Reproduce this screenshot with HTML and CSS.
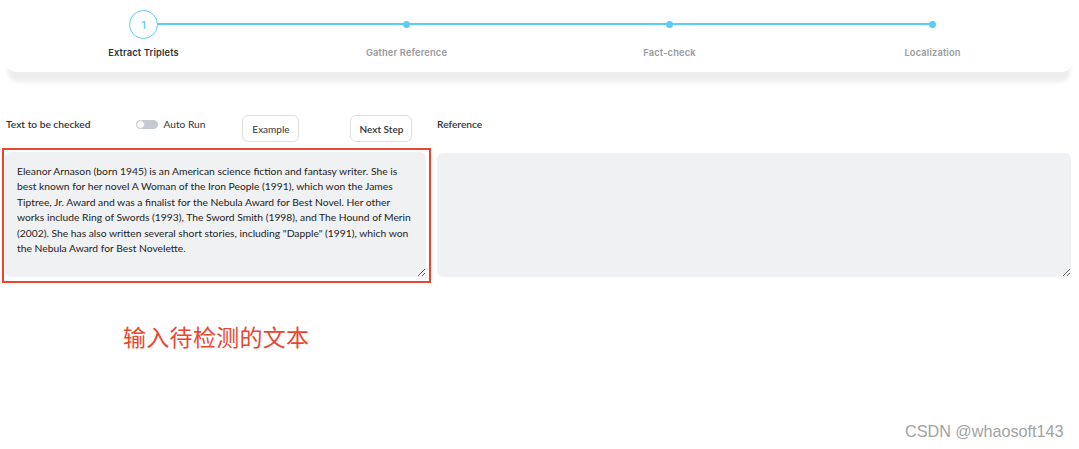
FILE: index.html
```html
<!DOCTYPE html>
<html lang="en">
<head>
<meta charset="utf-8">
<title>Fact-check</title>
<link rel="stylesheet" href="styles.css">
</head>
<body>
<div class="page">
  <div class="stepper">
    <div class="step active">
      <div class="node"><span class="circle">1</span></div>
      <div class="label">Extract Triplets</div>
    </div>
    <div class="step">
      <div class="node"><span class="dot"></span></div>
      <div class="label">Gather Reference</div>
    </div>
    <div class="step">
      <div class="node"><span class="dot"></span></div>
      <div class="label">Fact-check</div>
    </div>
    <div class="step last">
      <div class="node"><span class="dot"></span></div>
      <div class="label">Localization</div>
    </div>
  </div>

  <div class="panels">
    <div class="panel left">
      <div class="head">
        <span class="title">Text to be checked</span>
        <span class="switch"><span class="knob"></span></span>
        <span class="switch-label">Auto Run</span>
        <button class="btn btn-example">Example</button>
        <button class="btn btn-next">Next Step</button>
      </div>
      <div class="highlight">
        <textarea class="box" spellcheck="false">Eleanor Arnason (born 1945) is an American science fiction and fantasy writer. She is best known for her novel A Woman of the Iron People (1991), which won the James Tiptree, Jr. Award and was a finalist for the Nebula Award for Best Novel. Her other works include Ring of Swords (1993), The Sword Smith (1998), and The Hound of Merin (2002). She has also written several short stories, including "Dapple" (1991), which won the Nebula Award for Best Novelette.</textarea>
      </div>
    </div>
    <div class="panel right">
      <div class="head">
        <span class="title">Reference</span>
      </div>
      <textarea class="box ref" spellcheck="false"></textarea>
    </div>
  </div>

  <div class="note">输入待检测的文本</div>
</div>
<div class="watermark">CSDN @whaosoft143</div>
</body>
</html>
```

FILE: styles.css
```css
* { box-sizing: border-box; }

html, body {
  margin: 0;
  padding: 0;
  background: #ffffff;
}

body {
  width: 1079px;
  height: 449px;
  overflow: hidden;
  font-family: "Source Sans Pro", "Lato", "Noto Sans", sans-serif;
  color: #222;
}

.page {
  display: flex;
  flex-direction: column;
}

/* ---------- stepper ---------- */
.stepper {
  margin: 0 6px 0 5px;
  height: 72px;
  padding: 10px 9px 0 7px;
  background: #fff;
  border-radius: 0 0 12px 12px;
  box-shadow: 0 13px 4px -3px rgba(0, 0, 0, 0.07);
  display: grid;
  grid-template-columns: repeat(4, 1fr);
}

.step {
  position: relative;
  display: flex;
  flex-direction: column;
  align-items: center;
}

.step::after {
  content: "";
  position: absolute;
  top: 13px;
  left: 50%;
  width: 100%;
  height: 2px;
  background: #5ccdf6;
}

.step.last::after { display: none; }

.node {
  position: relative;
  z-index: 1;
  height: 29px;
  display: flex;
  align-items: center;
  justify-content: center;
}

.circle {
  width: 29px;
  height: 29px;
  border-radius: 50%;
  border: 1.5px solid #5ccdf6;
  background: #fff;
  color: #5ccdf6;
  font-family: "Inter", "Open Sans", sans-serif;
  font-size: 11px;
  font-weight: 500;
  display: flex;
  align-items: center;
  justify-content: center;
}

.dot {
  width: 7px;
  height: 7px;
  border-radius: 50%;
  background: #5ccdf6;
}

.label {
  margin-top: 8px;
  font-family: "Inter", "Open Sans", sans-serif;
  font-size: 9.3px;
  font-weight: 600;
  color: #9a9a9a;
  letter-spacing: 0.15px;
}

.step.active .label { color: #333; }

/* ---------- panels ---------- */
.panels {
  display: grid;
  grid-template-columns: 429px 1fr;
  column-gap: 6px;
  margin: 41px 8px 0 2px;
}

.head {
  height: 35px;
  display: flex;
  align-items: flex-start;
  padding-top: 3px;
  font-size: 10.2px;
}

.left .head { padding-left: 4px; }
.right .head { padding-left: 0; }

.title {
  font-weight: 600;
  color: #333;
  line-height: 12px;
  margin-top: 2px;
}

.switch {
  margin-left: 46px;
  margin-top: 4px;
  width: 22px;
  height: 9px;
  border-radius: 5px;
  background: #c5c9d2;
  position: relative;
  display: flex;
  align-items: center;
}

.knob {
  width: 9px;
  height: 9px;
  border-radius: 50%;
  background: #fff;
  border: 1px solid #c5c9d2;
}

.switch-label {
  margin-left: 5px;
  line-height: 12px;
  margin-top: 2px;
  color: #333;
}

.btn {
  height: 27px;
  border: 1px solid #dedede;
  border-radius: 6px;
  background: #fff;
  font-family: inherit;
  font-size: 10px;
  color: #333;
  padding: 0 6px;
  margin-top: -1px;
}

.btn-example {
  margin-left: 37px;
  width: 57px;
}

.btn-next {
  margin-left: 51px;
  width: 62px;
  font-weight: 600;
}

.highlight {
  border: 2px solid #e8472f;
  padding: 2px 3px 4px 1px;
  height: 135px;
}

.box {
  display: block;
  width: 100%;
  height: 125px;
  border: none;
  border-radius: 6px;
  background: #f0f1f3;
  padding: 12px 15px 0 12px;
  font-family: inherit;
  font-size: 10.3px;
  line-height: 15.4px;
  color: #222;
  resize: vertical;
  outline: none;
}

.box.ref {
  margin-top: 5px;
  height: 124px;
}

/* ---------- annotation ---------- */
.note {
  margin: 40px 0 0 123px;
  font-family: "Noto Sans CJK SC", sans-serif;
  font-size: 23px;
  line-height: 26px;
  color: #e8472f;
  letter-spacing: 0.3px;
}

.watermark {
  position: absolute;
  left: 905px;
  top: 422px;
  font-family: "Liberation Sans", Arial, sans-serif;
  font-size: 16.2px;
  color: #a2a2a2;
}
```
